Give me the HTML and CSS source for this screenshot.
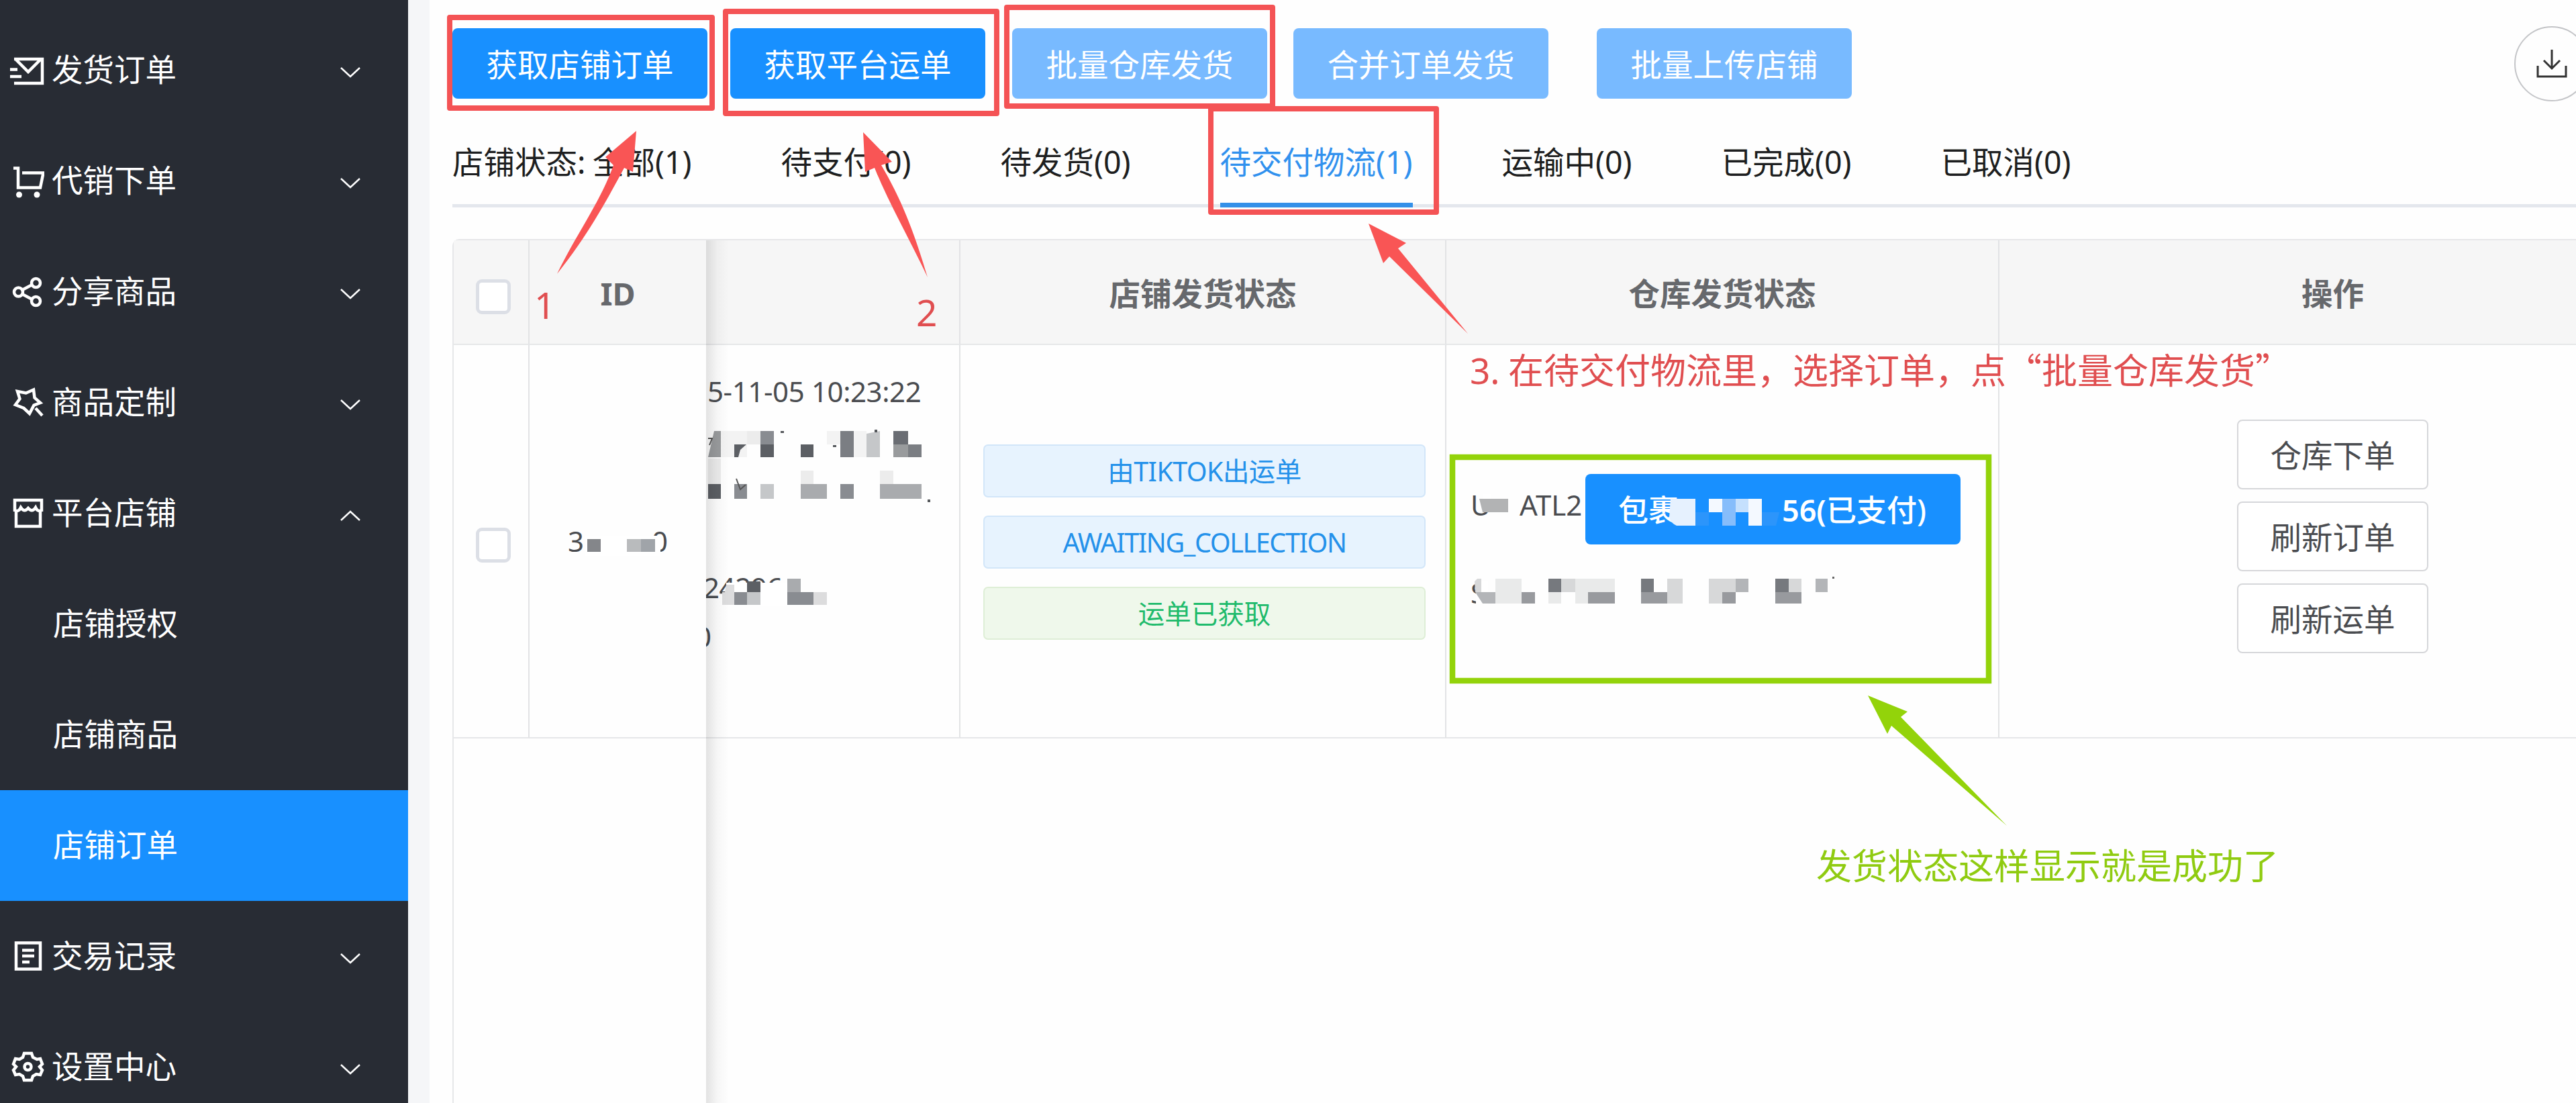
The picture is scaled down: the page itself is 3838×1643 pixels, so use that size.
FILE: index.html
```html
<!DOCTYPE html>
<html lang="zh-CN">
<head>
  <meta charset="UTF-8" />
  <meta name="viewport" content="width=device-width, initial-scale=1" />
  <title>店铺订单</title>
  <link rel="stylesheet" href="styles.css">
</head>
<body>
  <!-- 左侧菜单 -->
  <nav class="sidebar">
    <div class="menu-item">
      <svg class="menu-icon" viewBox="0 0 52 52"><path d="M7 9H49V45H7M10 10L28 28L46 10M1 24.5H12M1 35H18"/></svg>
      <span>发货订单</span>
      <svg class="arrow" viewBox="0 0 30 16"><path d="M1 1L15 14L29 1"/></svg>
    </div>
    <div class="menu-item">
      <svg class="menu-icon" viewBox="0 0 52 52"><path d="M6 6.5H13V35.5H46L50.5 13.5H19"/><circle class="dot" cx="14.500" cy="46" r="4.500"/><circle class="dot" cx="41" cy="46" r="4.500"/></svg>
      <span>代销下单</span>
      <svg class="arrow" viewBox="0 0 30 16"><path d="M1 1L15 14L29 1"/></svg>
    </div>
    <div class="menu-item">
      <svg class="menu-icon" viewBox="0 0 52 52"><circle cx="13.500" cy="26" r="6.500"/><circle cx="39.500" cy="12.500" r="6.500"/><circle cx="39.500" cy="39.500" r="6.500"/><path d="M19 23L34 15M19 29L34 37"/></svg>
      <span>分享商品</span>
      <svg class="arrow" viewBox="0 0 30 16"><path d="M1 1L15 14L29 1"/></svg>
    </div>
    <div class="menu-item">
      <svg class="menu-icon" viewBox="0 0 52 52"><path d="M12 9L24.700 11.500L36 6.500L37.500 18.500L46 26L36.500 29.600L30 42L21.500 34L9 29L15.500 20ZM39 34L49 45"/></svg>
      <span>商品定制</span>
      <svg class="arrow" viewBox="0 0 30 16"><path d="M1 1L15 14L29 1"/></svg>
    </div>
    <div class="menu-item">
      <svg class="menu-icon" viewBox="0 0 52 52"><path d="M8 23V6H48V23M10 23V45H46V23M8 21Q14 24 17 17Q22 25 28 18Q34 25 39 17Q42 24 48 21"/></svg>
      <span>平台店铺</span>
      <svg class="arrow" viewBox="0 0 30 16"><path d="M1 15L15 2L29 15"/></svg>
    </div>
    <div class="menu-item sub"><span>店铺授权</span></div>
    <div class="menu-item sub"><span>店铺商品</span></div>
    <div class="menu-item sub active"><span>店铺订单</span></div>
    <div class="menu-item">
      <svg class="menu-icon" viewBox="0 0 52 52"><path d="M10 5.500H46V44.500H10ZM19 16.500H37M19 25H37M19 34H30"/></svg>
      <span>交易记录</span>
      <svg class="arrow" viewBox="0 0 30 16"><path d="M1 1L15 14L29 1"/></svg>
    </div>
    <div class="menu-item">
      <svg class="menu-icon" viewBox="0 0 52 52"><path d="M22 5H33L35 11L41 14L46 13L49 21L45 25L49 30L46 37L40 36L35 39L33 45H22L20 39L15 36L9 37L6 30L10 25L6 21L9 13L15 14L20 11Z"/><circle cx="27.500" cy="25" r="5"/></svg>
      <span>设置中心</span>
      <svg class="arrow" viewBox="0 0 30 16"><path d="M1 1L15 14L29 1"/></svg>
    </div>
  </nav>

  <main class="content">
    <!-- 操作按钮 -->
    <div class="toolbar">
      <button class="btn btn-primary">获取店铺订单</button>
      <button class="btn btn-primary">获取平台运单</button>
      <button class="btn btn-disabled">批量仓库发货</button>
      <button class="btn btn-disabled">合并订单发货</button>
      <button class="btn btn-disabled btn-upload">批量上传店铺</button>
      <span class="btn-export">
        <svg viewBox="0 0 46 46"><path d="M23 2V30M11 18L23 30L35 18M2 26V42H44V26"/></svg>
      </span>
    </div>

    <!-- 状态标签 -->
    <div class="tabs">
      <span class="tabs-label">店铺状态:</span>
      <span class="tab">全部(1)</span>
      <span class="tab">待支付(0)</span>
      <span class="tab">待发货(0)</span>
      <span class="tab active">待交付物流(1)</span>
      <span class="tab">运输中(0)</span>
      <span class="tab">已完成(0)</span>
      <span class="tab">已取消(0)</span>
    </div>

    <!-- 订单表格 -->
    <div class="table">
      <div class="row head">
        <div class="cell"><i class="checkbox"></i></div>
        <div class="cell fixed">ID</div>
        <div class="cell"></div>
        <div class="cell">店铺发货状态</div>
        <div class="cell">仓库发货状态</div>
        <div class="cell">操作</div>
      </div>
      <div class="row body">
        <div class="cell"><i class="checkbox"></i></div>
        <div class="cell fixed cell-id">
          <span>3</span><span>0</span>
          <svg class="mosaic" viewBox="788 513 264 586">
            <path fill="#fff" d="M871 797h112v30h-112z"/>
            <path fill="#84868a" d="M874 802h20v19h-20z"/>
            <path fill="#b9bbbd" d="M933 802h21v19h-21z"/>
            <path fill="#a0a4a9" d="M954 802h21v19h-21z"/>
          </svg>
        </div>
        <div class="cell cell-info">
          <p>5-11-05 10:23:22</p>
          <p></p>
          <p></p>
          <p></p>
          <p class="cut-order">24296</p>
          <p class="cut">0</p>
          <svg class="mosaic" viewBox="1052 513 379 586">
            <path fill="#fff" d="M1082 867h110v34h-110z"/>
            <path fill="#f3f3f3" d="M1074 641h39v39h-39zM1272 641h19v39h-19zM1232 641h20v20h-20z"/>
            <path fill="#ececec" d="M1113 641h20v20h-20zM1055 682h19v38h-19zM1193 700h19v20h-19zM1311 700h20v20h-20z"/>
            <path fill="#999b9d" d="M1064 641h10v39h-19zM1331 661h22v19h-22z"/>
            <path fill="#5c5f64" d="M1094 661h18l-9 8l-3 11h-6zM1133 661h20v19h-20zM1193 661h19v19h-19zM1055 720h19v22h-19zM1113 865h20v16h-20z"/>
            <path fill="#898c91" d="M1133 641h20v20h-20zM1252 720h20v22h-20zM1094 720h19v22h-19zM1094 881h19v19h-19zM1173 881h39v19h-39z"/>
            <path fill="#7b7e83" d="M1252 641h20v39h-20zM1353 661h20v19h-20z"/>
            <path fill="#6a6d73" d="M1331 641h22v20h-22z"/>
            <path fill="#c5c7c9" d="M1291 645l20-4v39h-20zM1133 720h20v22h-20zM1113 881h20v19h-20z"/>
            <path fill="#a9abae" d="M1193 720h39v22h-39zM1311 720h62v22h-62zM1173 861h20v20h-20z"/>
            <path fill="#dcdcdd" d="M1212 881h20v19h-20zM1082 870h12v11h-14zM1076 881h18v19h-18z"/>
            <path fill="#55585c" d="M1382 743h4v4h-4zM1163 641h5v3h-5zM1241 662h5v3h-5zM1303 639h4v4h-4z"/>
            <path stroke="#555" stroke-width="2" fill="none" d="M1055 652h6l-4 10M1097 712l6 16l8-7"/>
          </svg>
        </div>
        <div class="cell cell-tags">
          <span class="tag">由TIKTOK出运单</span>
          <span class="tag tag-status">AWAITING_COLLECTION</span>
          <span class="tag tag-success">运单已获取</span>
        </div>
        <div class="cell cell-depot">
          <div class="depot-line">
            <span class="depot-u">U</span><span class="depot-name">ATL2</span>
            <button class="btn btn-primary btn-package"><span>包裹</span><span><b>56(</b>已支付)</span></button>
          </div>
          <p>S</p>
          <svg class="mosaic" viewBox="2155 513 824 586">
            <path fill="#b2b3b4" d="M2204 742h43v20h-38z"/>
            <path fill="#fff" d="M2199 865h18v34h-18zM2210 735h12v7h-12z"/>
            <path fill="#e9eaea" d="M2228 861h39v20h-39zM2228 881h39v17h-39zM2307 881h19v17h-19zM2347 861h19v37h-19zM2366 861h40v20h-40z"/>
            <path fill="#d7d8d9" d="M2197 865l4-4h6v20h-9zM2326 861h21v20h-21zM2484 861h23v37h-23zM2546 861h40v20h-40zM2546 881h20v17h-20zM2665 861h19v20h-19z"/>
            <path fill="#b3b5b8" d="M2198 881h30v17h-19zM2586 861h19v20h-19zM2705 861h18v20h-18z"/>
            <path fill="#989a9e" d="M2267 881h20v17h-20zM2366 881h40v17h-40zM2445 881h39v17h-39zM2566 881h20v17h-20zM2645 881h39v17h-39z"/>
            <path fill="#76797e" d="M2307 861h19v20h-19zM2445 861h19v20h-19zM2645 861h20v20h-20z"/>
            <path fill="#666" d="M2730 858h3v3h-3z"/>
            <path fill="#e6f1fe" d="M2489 742h37v40h-28q-9-4-11-12z"/>
            <path fill="#2c95fb" d="M2526 762h20v20h-20zM2625 762h26l-5 20h-21z"/>
            <path fill="#f4f9ff" d="M2546 742h20v20h-20zM2605 742h20v40h-20z"/>
            <path fill="#86bdfb" d="M2566 742h20v40h-20z"/>
            <path fill="#c5e0fd" d="M2586 742h19v20h-19z"/>
          </svg>
        </div>
        <div class="cell cell-actions">
          <button class="btn btn-plain">仓库下单</button>
          <button class="btn btn-plain">刷新订单</button>
          <button class="btn btn-plain">刷新运单</button>
        </div>
      </div>
      <div class="row rest">
        <div class="blank fixed"></div>
      </div>
    </div>
  </main>

  <!-- 操作说明标注 -->
  <div class="guide">
    <svg class="guide-marks" viewBox="0 0 3838 1643">
      <g class="mark-red">
        <rect x="670" y="26" width="391" height="135"/>
        <rect x="1081" y="17" width="404" height="152"/>
        <rect x="1500" y="11" width="396" height="147"/>
        <rect x="1804" y="162" width="336" height="154"/>
      </g>
      <g class="fill-red">
        <path d="M948 195L902 234L914 246C895 300 858 350 830 408C876 350 902 302 930 250L943 256Z"/>
        <path d="M1286 197L1289 256L1303 250C1325 304 1355 356 1382 413C1364 352 1345 300 1313 246L1329 241Z"/>
        <path d="M2039 333L2061 392L2070 382L2187 497L2083 370L2095 362Z"/>
      </g>
      <rect class="mark-green" x="2164" y="681" width="799" height="333"/>
      <path class="fill-green" d="M2783 1036L2812 1093L2818 1081L2990 1230L2832 1068L2842 1060Z"/>
    </svg>
    <span class="note note-1">1</span>
    <span class="note note-2">2</span>
    <span class="note note-3"><b>3.</b>在待交付物流里，选择订单，点“批量仓库发货”</span>
    <span class="note note-ok">发货状态这样显示就是成功了</span>
  </div>
</body>
</html>
```
FILE: styles.css
```css
/* ===== 全局 ===== */
* {
  box-sizing: border-box;
}
body {
  margin: 0;
  display: flex;
  position: relative;
  width: 3838px;
  height: 1643px;
  overflow: hidden;
  background-color: #fefefe;
  color: #4a4c50;
  font-family: "Noto Sans", "Noto Sans CJK SC", sans-serif;
  font-size: 46.5px;
  line-height: 60px;
  white-space: nowrap;
}
p {
  margin: 0;
}
button {
  font: inherit;
}

/* ===== 左侧菜单 ===== */
.sidebar {
  flex: none;
  width: 608px;
  padding-top: 22px;
  background-color: #282c34;
  color: #fff;
}
.menu-item {
  display: flex;
  align-items: center;
  height: 165px;
  padding: 0 71px 0 14px;
}
.menu-item span {
  margin-bottom: 3px;
}
.menu-item.sub {
  padding-left: 79px;
}
.menu-item.active {
  background-color: #1890ff;
}
.menu-icon {
  width: 52px;
  height: 52px;
  margin-right: 11px;
  fill: none;
  stroke: #fff;
  stroke-width: 4.5;
}
.menu-icon .dot {
  fill: #fff;
  stroke: none;
}
.arrow {
  width: 30px;
  height: 16px;
  margin-top: 6px;
  margin-left: auto;
  fill: none;
  stroke: #fff;
  stroke-width: 2.5;
}

/* ===== 内容区 ===== */
.content {
  flex: 1;
  min-width: 0;
  padding: 42px 0 0 34px;
  border-left: 32px solid #f5f6f8;
  overflow: hidden;
}
.toolbar {
  display: flex;
  align-items: center;
  height: 105px;
}
.btn {
  flex: none;
  width: 380px;
  height: 105px;
  margin: 0 39px 0 0;
  padding: 2px 0 0;
  border: none;
  border-radius: 8px;
  color: #fff;
}
.btn-primary {
  background-color: #1890ff;
}
.toolbar .btn-primary {
  margin-right: 34px;
}
.toolbar .btn-primary + .btn-primary {
  margin-right: 40px;
}
.btn-disabled {
  background-color: #78baff;
}
.btn-upload {
  margin-left: 33px;
}
.btn-export {
  flex: none;
  display: flex;
  align-items: center;
  justify-content: center;
  width: 112px;
  height: 112px;
  margin-left: 948px;
  border: 2px solid #c4c5c8;
  border-radius: 50%;
}
.btn-export svg {
  width: 46px;
  height: 46px;
  fill: none;
  stroke: #333;
  stroke-width: 3;
}

/* ===== 状态标签 ===== */
.tabs {
  display: flex;
  gap: 133px;
  height: 162px;
  padding-top: 64px;
  border-bottom: 5px solid #e4e7ed;
  color: #1d1e20;
}
.tabs-label {
  width: 209px;
  margin-right: -133px;
}
.tab {
  height: 98px;
}
.tab.active {
  color: #3191ee;
  border-bottom: 7px solid #3490e8;
}

/* ===== 表格 ===== */
.table {
  width: 3300px;
  margin-top: 47px;
  border-top: 2px solid #e6e7e9;
  border-left: 2px solid #e6e7e9;
  border-top-left-radius: 10px;
}
.row {
  display: grid;
  grid-template-columns: 113px 263px 379px 724px 824px 995px;
}
.cell {
  position: relative;
  display: flex;
  align-items: center;
  justify-content: center;
  border-right: 2px solid #e2e3e5;
  border-bottom: 2px solid #e6e7e9;
}
.head {
  height: 156px;
  color: #66686c;
  font-weight: bold;
}
.head .cell {
  padding-top: 3px;
  background-color: #f6f6f6;
}
.body {
  height: 586px;
}
.fixed {
  z-index: 1;
  border-right: none;
}
/* 固定列阴影 */
.fixed::after {
  content: "";
  position: absolute;
  top: 0;
  bottom: -2px;
  left: 100%;
  width: 34px;
  background: linear-gradient(to right, rgba(0,0,0,0.11), rgba(0,0,0,0.03) 50%, rgba(0,0,0,0));
}
.rest {
  height: 560px;
}
.blank {
  grid-column: 1 / 3;
  position: relative;
}
.checkbox {
  width: 52px;
  height: 52px;
  margin-top: 11px;
  margin-left: 7px;
  border: 5px solid #dcdfe6;
  border-radius: 9px;
  background-color: #fff;
}
.mosaic {
  position: absolute;
  top: 0;
  left: 0;
}
.cell-id .mosaic {
  width: 264px;
  height: 586px;
}
.cell-info .mosaic {
  width: 379px;
  height: 586px;
}
.cell-depot .mosaic {
  width: 824px;
  height: 586px;
}
.cell-id {
  gap: 101px;
  font-size: 42px;
}
.cell-info {
  flex-direction: column;
  align-items: flex-start;
  justify-content: flex-start;
  padding: 32px 0 0 2px;
  overflow: hidden;
  font-size: 42px;
}
.cell-info p {
  height: 73px;
  line-height: 73px;
  letter-spacing: -0.4px;
}
.cell-info .cut-order {
  margin-left: -6px;
}
.cell-info .cut {
  margin-left: -18px;
}
.cell-tags {
  flex-direction: column;
  align-items: stretch;
  gap: 27px;
  padding: 2px 29px 0 34px;
  font-size: 39.5px;
}
.tag {
  height: 79px;
  line-height: 76px;
  border: 2px solid #d2e6f9;
  border-radius: 7px;
  background-color: #e7f3fe;
  color: #2491ea;
  text-align: center;
  letter-spacing: -0.6px;
}
.tag-status {
  letter-spacing: -1.4px;
}
.tag-success {
  border-color: #deeed6;
  background-color: #eff8eb;
  color: #1fbb6c;
  letter-spacing: 0;
}
.cell-depot {
  display: block;
  padding: 192px 0 0 36px;
  font-size: 42px;
}
.depot-line {
  display: flex;
}
.depot-u {
  width: 73px;
  line-height: 92px;
}
.depot-name {
  width: 98px;
  line-height: 92px;
}
.cell-depot p {
  margin-top: 41px;
  line-height: 62px;
}
.btn-package {
  display: flex;
  align-items: center;
  justify-content: space-between;
  width: 559px;
  padding: 2px 51px 0 49px;
  font-size: 45px;
  font-weight: 500;
}
.btn-package b {
  font-weight: 600;
}
.cell-actions {
  flex-direction: column;
  gap: 18px;
  padding-bottom: 14px;
}
.btn-plain {
  width: 285px;
  height: 104px;
  margin: 0;
  border: 2px solid #d6d7da;
  background-color: #fff;
  color: #4a4c50;
}

/* ===== 标注层 ===== */
.guide {
  position: absolute;
  inset: 0;
  z-index: 2;
  overflow: hidden;
}
.guide-marks {
  position: absolute;
  width: 3838px;
  height: 1643px;
}
.mark-red {
  fill: none;
  stroke: #f45355;
  stroke-width: 8;
  stroke-linejoin: round;
}
.fill-red {
  fill: #f95555;
}
.mark-green {
  fill: none;
  stroke: #93d30a;
  stroke-width: 8.5;
}
.fill-green {
  fill: #93d30a;
}
.note {
  position: absolute;
  color: #e04e50;
  font-size: 55px;
  line-height: 60px;
}
.note-1 {
  left: 796px;
  top: 424px;
}
.note-2 {
  left: 1365px;
  top: 435px;
}
.note-3 {
  left: 2190px;
  top: 519px;
  font-family: "Noto Sans CJK SC", sans-serif;
  font-size: 53px;
}
.note-3 b {
  display: inline-block;
  width: 57px;
  font-family: "Noto Sans", sans-serif;
  font-weight: normal;
}
.note-ok {
  left: 2706px;
  top: 1260px;
  color: #8fcb10;
  font-size: 53px;
}
```
